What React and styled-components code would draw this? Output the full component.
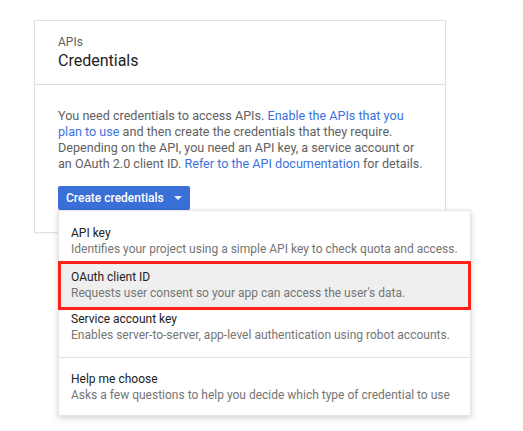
import React from 'react';
import styled, { createGlobalStyle } from 'styled-components';

const GlobalStyle = createGlobalStyle`
  body {
    margin: 0;
    background: #fff;
    font-family: Roboto, 'Liberation Sans', Arial, sans-serif;
    color: #212121;
  }
`;

const Page = styled.div`
  padding: 20px 0 0 34px;
  width: 523px;
  height: 431px;
  box-sizing: border-box;
`;

const Card = styled.div`
  width: 412px;
  box-sizing: border-box;
  border: 1px solid #e0e0e0;
  box-shadow: 0 1px 2px rgba(0, 0, 0, 0.06);
  background: #fff;
`;

const CardHeader = styled.div`
  padding: 13px 23px 12px;
  border-bottom: 1px solid #dadada;
`;

const Eyebrow = styled.div`
  font-size: 12px;
  line-height: 16px;
  color: #616161;
`;

const Title = styled.h1`
  margin: 0;
  font-size: 16px;
  font-weight: 400;
  line-height: 22px;
  color: #212121;
`;

const CardBody = styled.div`
  padding: 23px 23px 22px;
`;

const Intro = styled.p`
  margin: 0 0 14px;
  font-size: 12.6px;
  line-height: 16px;
  color: #616161;
  white-space: nowrap;
`;

const TextLink = styled.a`
  color: #3b73de;
  text-decoration: none;
`;

const DropAnchor = styled.div`
  position: relative;
  display: inline-block;
  vertical-align: top;
`;

const DropButton = styled.button`
  display: inline-flex;
  align-items: center;
  gap: 10px;
  height: 24px;
  padding: 0 8px;
  border: 0;
  border-radius: 2px;
  background: #3b6fd8;
  color: #fff;
  font-family: inherit;
  font-size: 12px;
  font-weight: 500;
`;

const Caret = styled.span`
  width: 0;
  height: 0;
  border-left: 4px solid transparent;
  border-right: 4px solid transparent;
  border-top: 4px solid #e8eefb;
`;

const Menu = styled.div`
  position: absolute;
  left: 0;
  top: 100%;
  width: 413px;
  box-sizing: border-box;
  padding: 8px 0 7px;
  background: #fff;
  border: 1px solid #e6e6e6;
  box-shadow: 0 2px 6px rgba(0, 0, 0, 0.18);
  z-index: 2;
`;

const Item = styled.div`
  padding: 6px 12px 5px;
  ${(p) =>
    p.$marked &&
    `
    margin: -1px -1px -5px;
    padding: 5px 9px 6px 10px;
    border: 3px solid #ff2218;
    background: #efefef;
  `}
`;

const ItemTitle = styled.div`
  font-size: 12px;
  line-height: 16px;
  color: #212121;
`;

const ItemDesc = styled.div`
  font-size: 12px;
  line-height: 16px;
  color: #757575;
  white-space: nowrap;
`;

const Separator = styled.div`
  height: 1px;
  margin: 9px 0 7px;
  background: #e3e3e3;
`;

const options = [
  { title: 'API key', desc: 'Identifies your project using a simple API key to check quota and access.' },
  { title: 'OAuth client ID', desc: "Requests user consent so your app can access the user's data.", marked: true },
  { title: 'Service account key', desc: 'Enables server-to-server, app-level authentication using robot accounts.' },
];

const App = () => (
  <>
    <GlobalStyle />
    <Page>
      <Card>
        <CardHeader>
          <Eyebrow>APIs</Eyebrow>
          <Title>Credentials</Title>
        </CardHeader>
        <CardBody>
          <Intro>
            You need credentials to access APIs. <TextLink href="#">Enable the APIs that you</TextLink>
            <br />
            <TextLink href="#">plan to use</TextLink> and then create the credentials that they require.
            <br />
            Depending on the API, you need an API key, a service account or
            <br />
            an OAuth 2.0 client ID. <TextLink href="#">Refer to the API documentation</TextLink> for details.
          </Intro>
          <DropAnchor>
            <DropButton>
              Create credentials <Caret />
            </DropButton>
            <Menu>
              {options.map((o) => (
                <Item key={o.title} $marked={o.marked}>
                  <ItemTitle>{o.title}</ItemTitle>
                  <ItemDesc>{o.desc}</ItemDesc>
                </Item>
              ))}
              <Separator />
              <Item>
                <ItemTitle>Help me choose</ItemTitle>
                <ItemDesc>Asks a few questions to help you decide which type of credential to use</ItemDesc>
              </Item>
            </Menu>
          </DropAnchor>
        </CardBody>
      </Card>
    </Page>
  </>
);

export default App;
